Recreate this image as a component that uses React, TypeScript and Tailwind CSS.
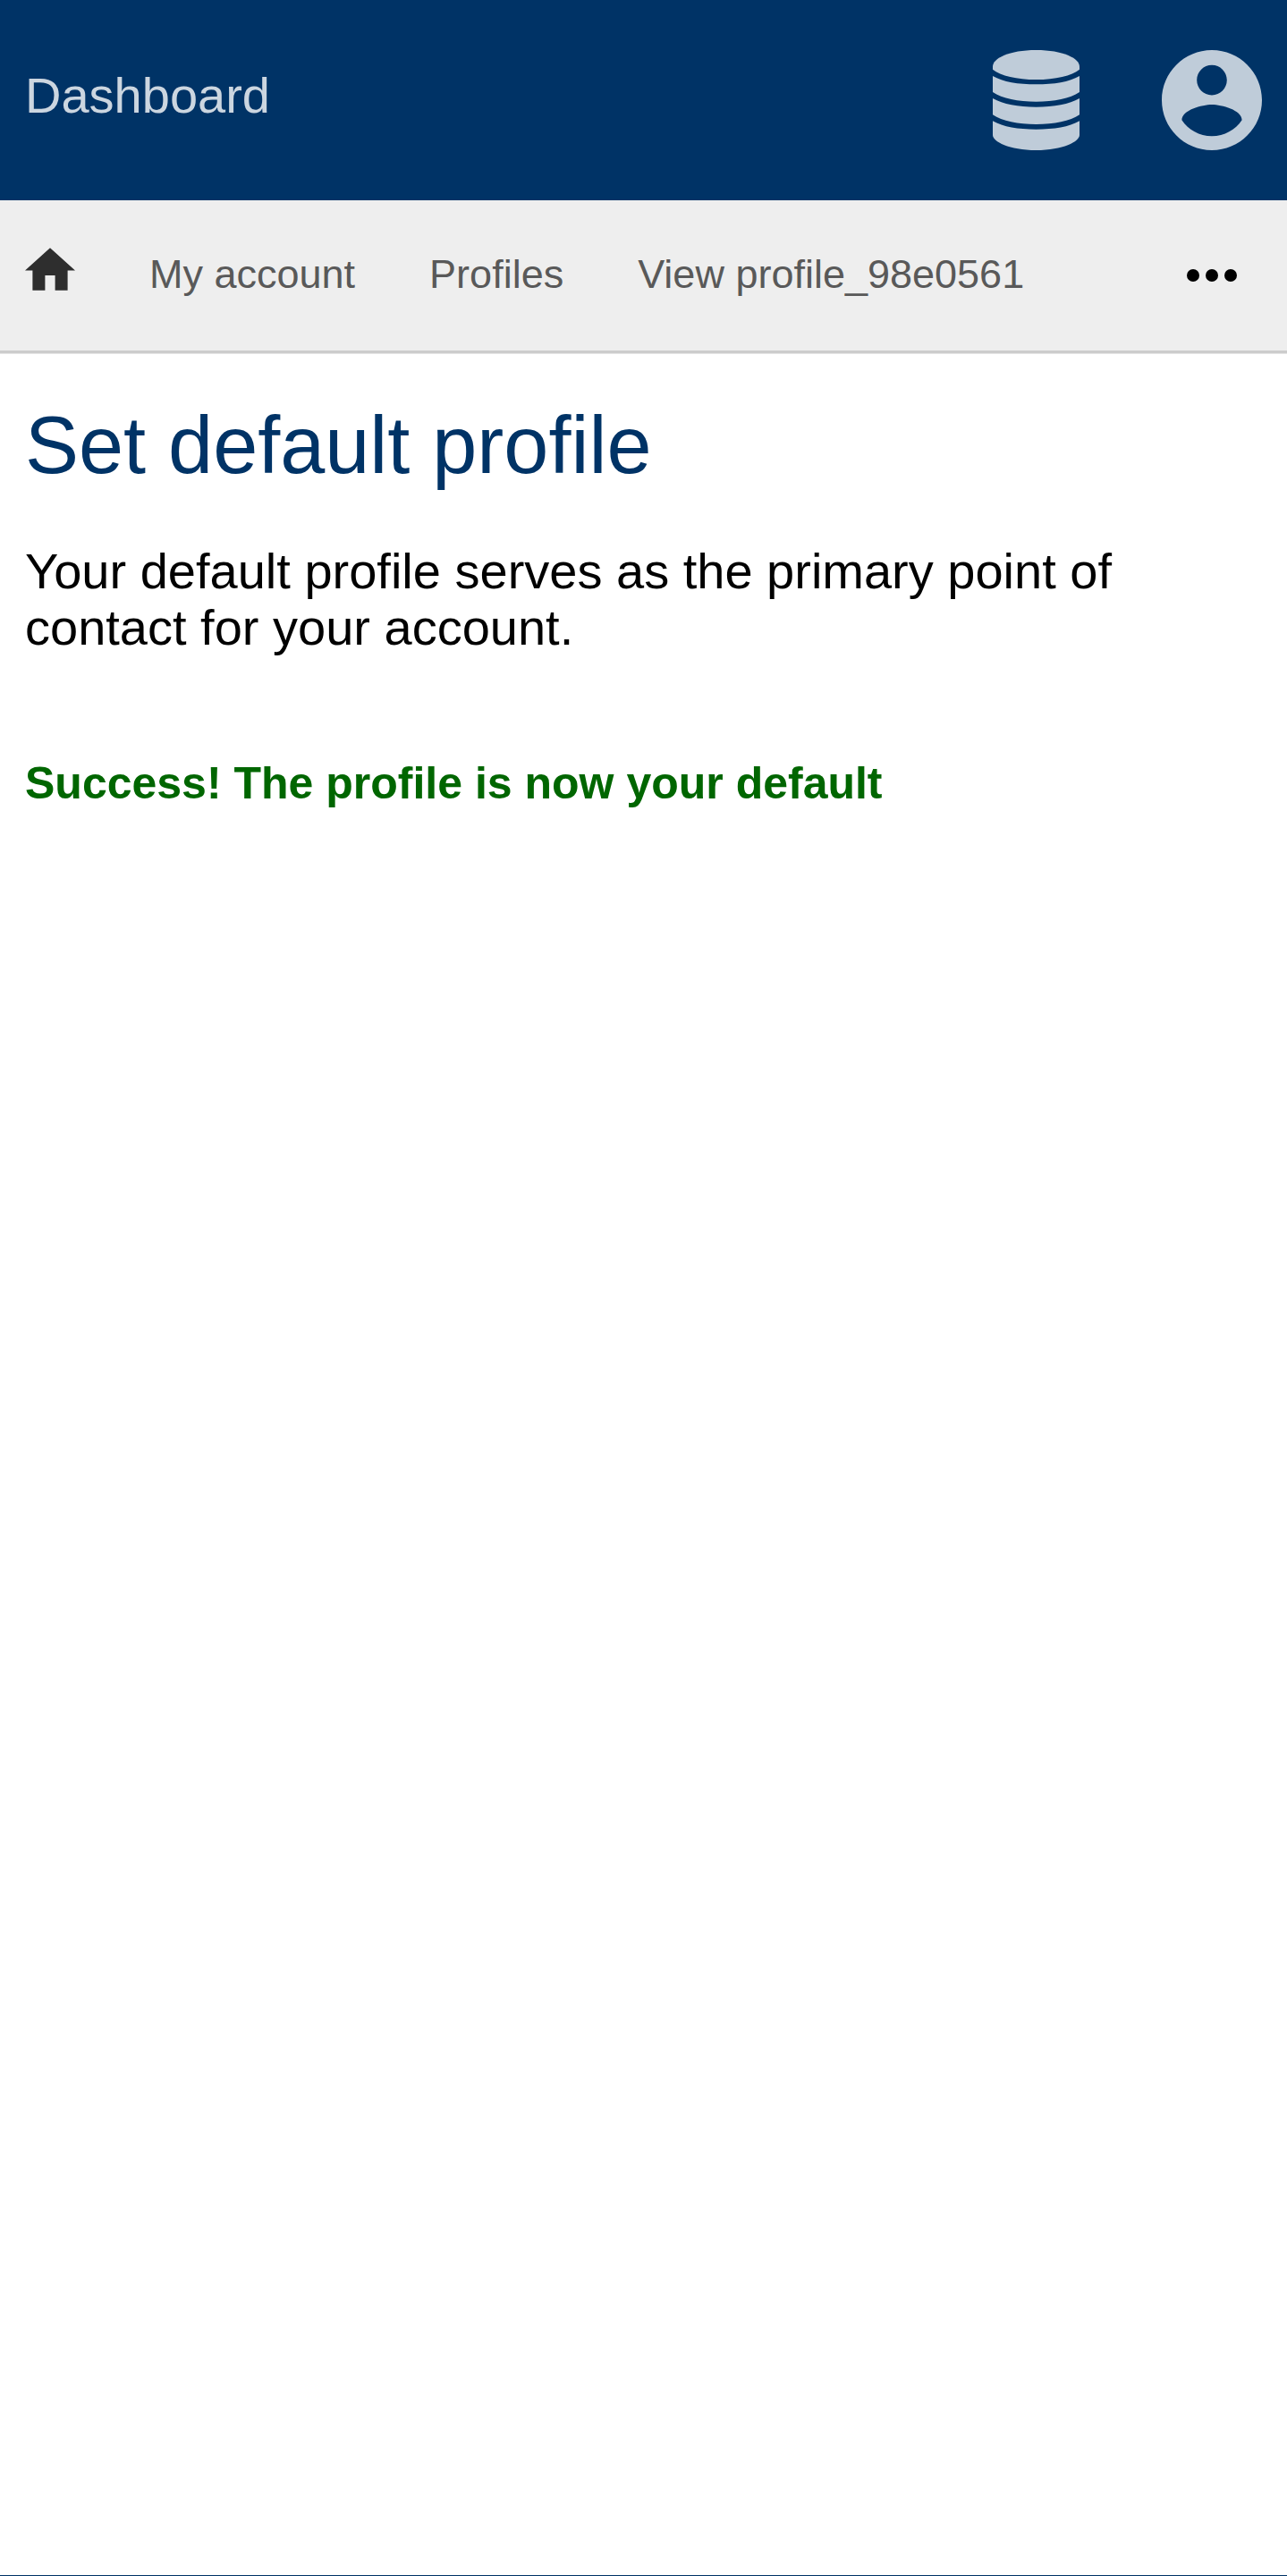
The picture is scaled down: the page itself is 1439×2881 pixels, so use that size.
const crumbs = [
  { label: "My account", href: "#account" },
  { label: "Profiles", href: "#profiles" },
  { label: "View profile_98e0561", href: "#profile" },
];

function DatabaseIcon() {
  return (
    <svg viewBox="0 0 291 336" className="h-28 w-[97px]" fill="currentColor" aria-hidden="true">
      <path d="M0 55C0 28 55 0 145.500 0S291 28 291 55V65C265 86 210 99 145.500 99S26 86 0 65Z" />
      <path d="M0 87C35 107 85 115 145.500 115S256 107 291 87V141C260 163 205 173 145.500 173S31 163 0 141Z" />
      <path d="M0 162C35 182 85 191 145.500 191S256 182 291 162V217C260 239 205 249 145.500 249S31 239 0 217Z" />
      <path d="M0 238C35 258 85 266 145.500 266S256 258 291 238V285C291 307 236 336 145.500 336S0 307 0 285Z" />
    </svg>
  );
}

function AccountIcon() {
  return (
    <svg viewBox="2 2 20 20" className="size-28" fill="currentColor" aria-hidden="true">
      <path d="M12 2C6.480 2 2 6.480 2 12s4.480 10 10 10 10-4.480 10-10S17.520 2 12 2zm0 3c1.660 0 3 1.340 3 3s-1.340 3-3 3-3-1.340-3-3 1.340-3 3-3zm0 14.200c-2.500 0-4.710-1.280-6-3.220.03-1.990 4-3.080 6-3.080 1.990 0 5.970 1.090 6 3.080-1.290 1.940-3.500 3.220-6 3.220z" />
    </svg>
  );
}

function HomeIcon() {
  return (
    <svg viewBox="2 3 20 17" className="h-12 w-14" fill="currentColor" aria-hidden="true">
      <path d="M10 20v-6h4v6h5v-8h3L12 3 2 12h3v8z" />
    </svg>
  );
}

function MoreIcon() {
  return (
    <svg viewBox="0 0 16 4" className="h-3.5 w-14" fill="currentColor" aria-hidden="true">
      <circle cx="2" cy="2" r="2" />
      <circle cx="8" cy="2" r="2" />
      <circle cx="14" cy="2" r="2" />
    </svg>
  );
}

export default function App() {
  return (
    <div className="flex min-h-screen flex-col bg-white font-['Liberation_Sans',Arial,sans-serif] text-black">
      <header className="flex h-56 items-center justify-between bg-[#003366] px-7">
        <a href="#dashboard" className="pb-2.5 text-[56px] leading-[64px] text-[#ccd6e0]">
          Dashboard
        </a>
        <div className="flex items-center gap-[92px] text-[#bfccd9]">
          <button type="button" aria-label="Data">
            <DatabaseIcon />
          </button>
          <button type="button" aria-label="Account">
            <AccountIcon />
          </button>
        </div>
      </header>

      <nav
        aria-label="Breadcrumb"
        className="flex h-[171px] items-center justify-between border-b-3 border-[#cccccc] bg-[#eeeeee] pr-14 pl-7 shadow-[0_1px_0_#e5e5e5]"
      >
        <ul className="flex items-center gap-[83px] text-[45px] leading-[52px] text-[#595959]">
          <li className="pb-3.5 text-[#2e2e2e]">
            <a href="#home" aria-label="Home" className="block">
              <HomeIcon />
            </a>
          </li>
          {crumbs.map((crumb) => (
            <li key={crumb.label} className="pb-0.5">
              <a href={crumb.href}>{crumb.label}</a>
            </li>
          ))}
        </ul>
        <button type="button" aria-label="More">
          <MoreIcon />
        </button>
      </nav>

      <main className="grow px-7 pt-[51px]">
        <h1 className="text-[90px] leading-[104px] text-[#003366]">Set default profile</h1>
        <p className="mt-[57px] text-[56px] leading-[63px]">
          Your default profile serves as the primary point of contact for your account.
        </p>
        <p role="status" className="mt-[114px] text-[50px] leading-[58px] font-bold text-[#006600]">
          Success! The profile is now your default
        </p>
      </main>

      <footer className="border-t border-[#003366]" />
    </div>
  );
}
